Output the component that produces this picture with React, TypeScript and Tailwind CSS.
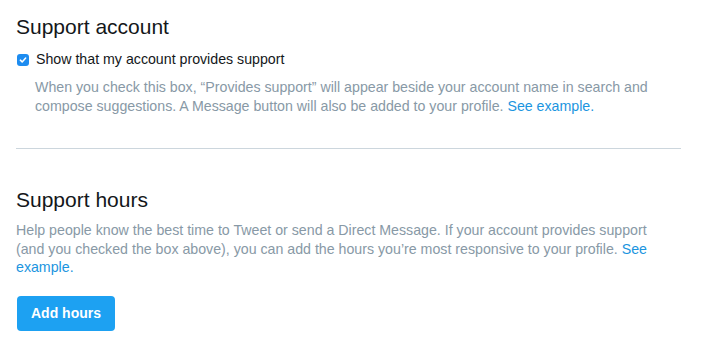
import React from 'react';

export default function App() {
  return (
    <div className="min-h-screen bg-white px-4 pt-[13px] font-['Liberation_Sans',Arial,sans-serif] text-[#14171a]">
      <div className="w-[650px]">
        {/* Support account */}
        <h2 className="text-[21px] leading-[28px]">Support account</h2>
        <label className="mt-[9px] flex items-center gap-[7px] text-[14.2px] leading-[18px]">
          <span className="ml-[1px] mt-[1px] flex h-[12px] w-[12px] items-center justify-center rounded-[3px] bg-[#1d8cf0]">
            <svg viewBox="0 0 12 12" className="h-[10px] w-[10px]">
              <path d="M2.8 6.2 L5 8.3 L9.2 3.6" fill="none" stroke="white" strokeWidth="1.8" strokeLinecap="round" strokeLinejoin="round" />
            </svg>
          </span>
          Show that my account provides support
        </label>
        <p className="mt-[10px] pl-[19px] text-[14.2px] leading-[18.5px] text-[#8899a6]">
          When you check this box, “Provides support” will appear beside your account name in search and
          compose suggestions. A Message button will also be added to your profile.{' '}
          <a href="#" className="text-[#1b95e0]">See example.</a>
        </p>

        <div className="mt-[33px] w-[665px] border-t border-[#ccd6dd]" />

        {/* Support hours */}
        <h2 className="mt-[37px] text-[21px] leading-[28px]">Support hours</h2>
        <p className="mt-[7px] text-[14.2px] leading-[18.5px] text-[#8899a6]">
          Help people know the best time to Tweet or send a Direct Message. If your account provides support
          (and you checked the box above), you can add the hours you’re most responsive to your profile.{' '}
          <a href="#" className="text-[#1b95e0]">See example.</a>
        </p>
        <button className="mt-[19px] ml-[1px] h-[35px] w-[98px] rounded-[4px] bg-[#1da1f2] text-[14px] font-bold text-white">
          Add hours
        </button>
      </div>
    </div>
  );
}
